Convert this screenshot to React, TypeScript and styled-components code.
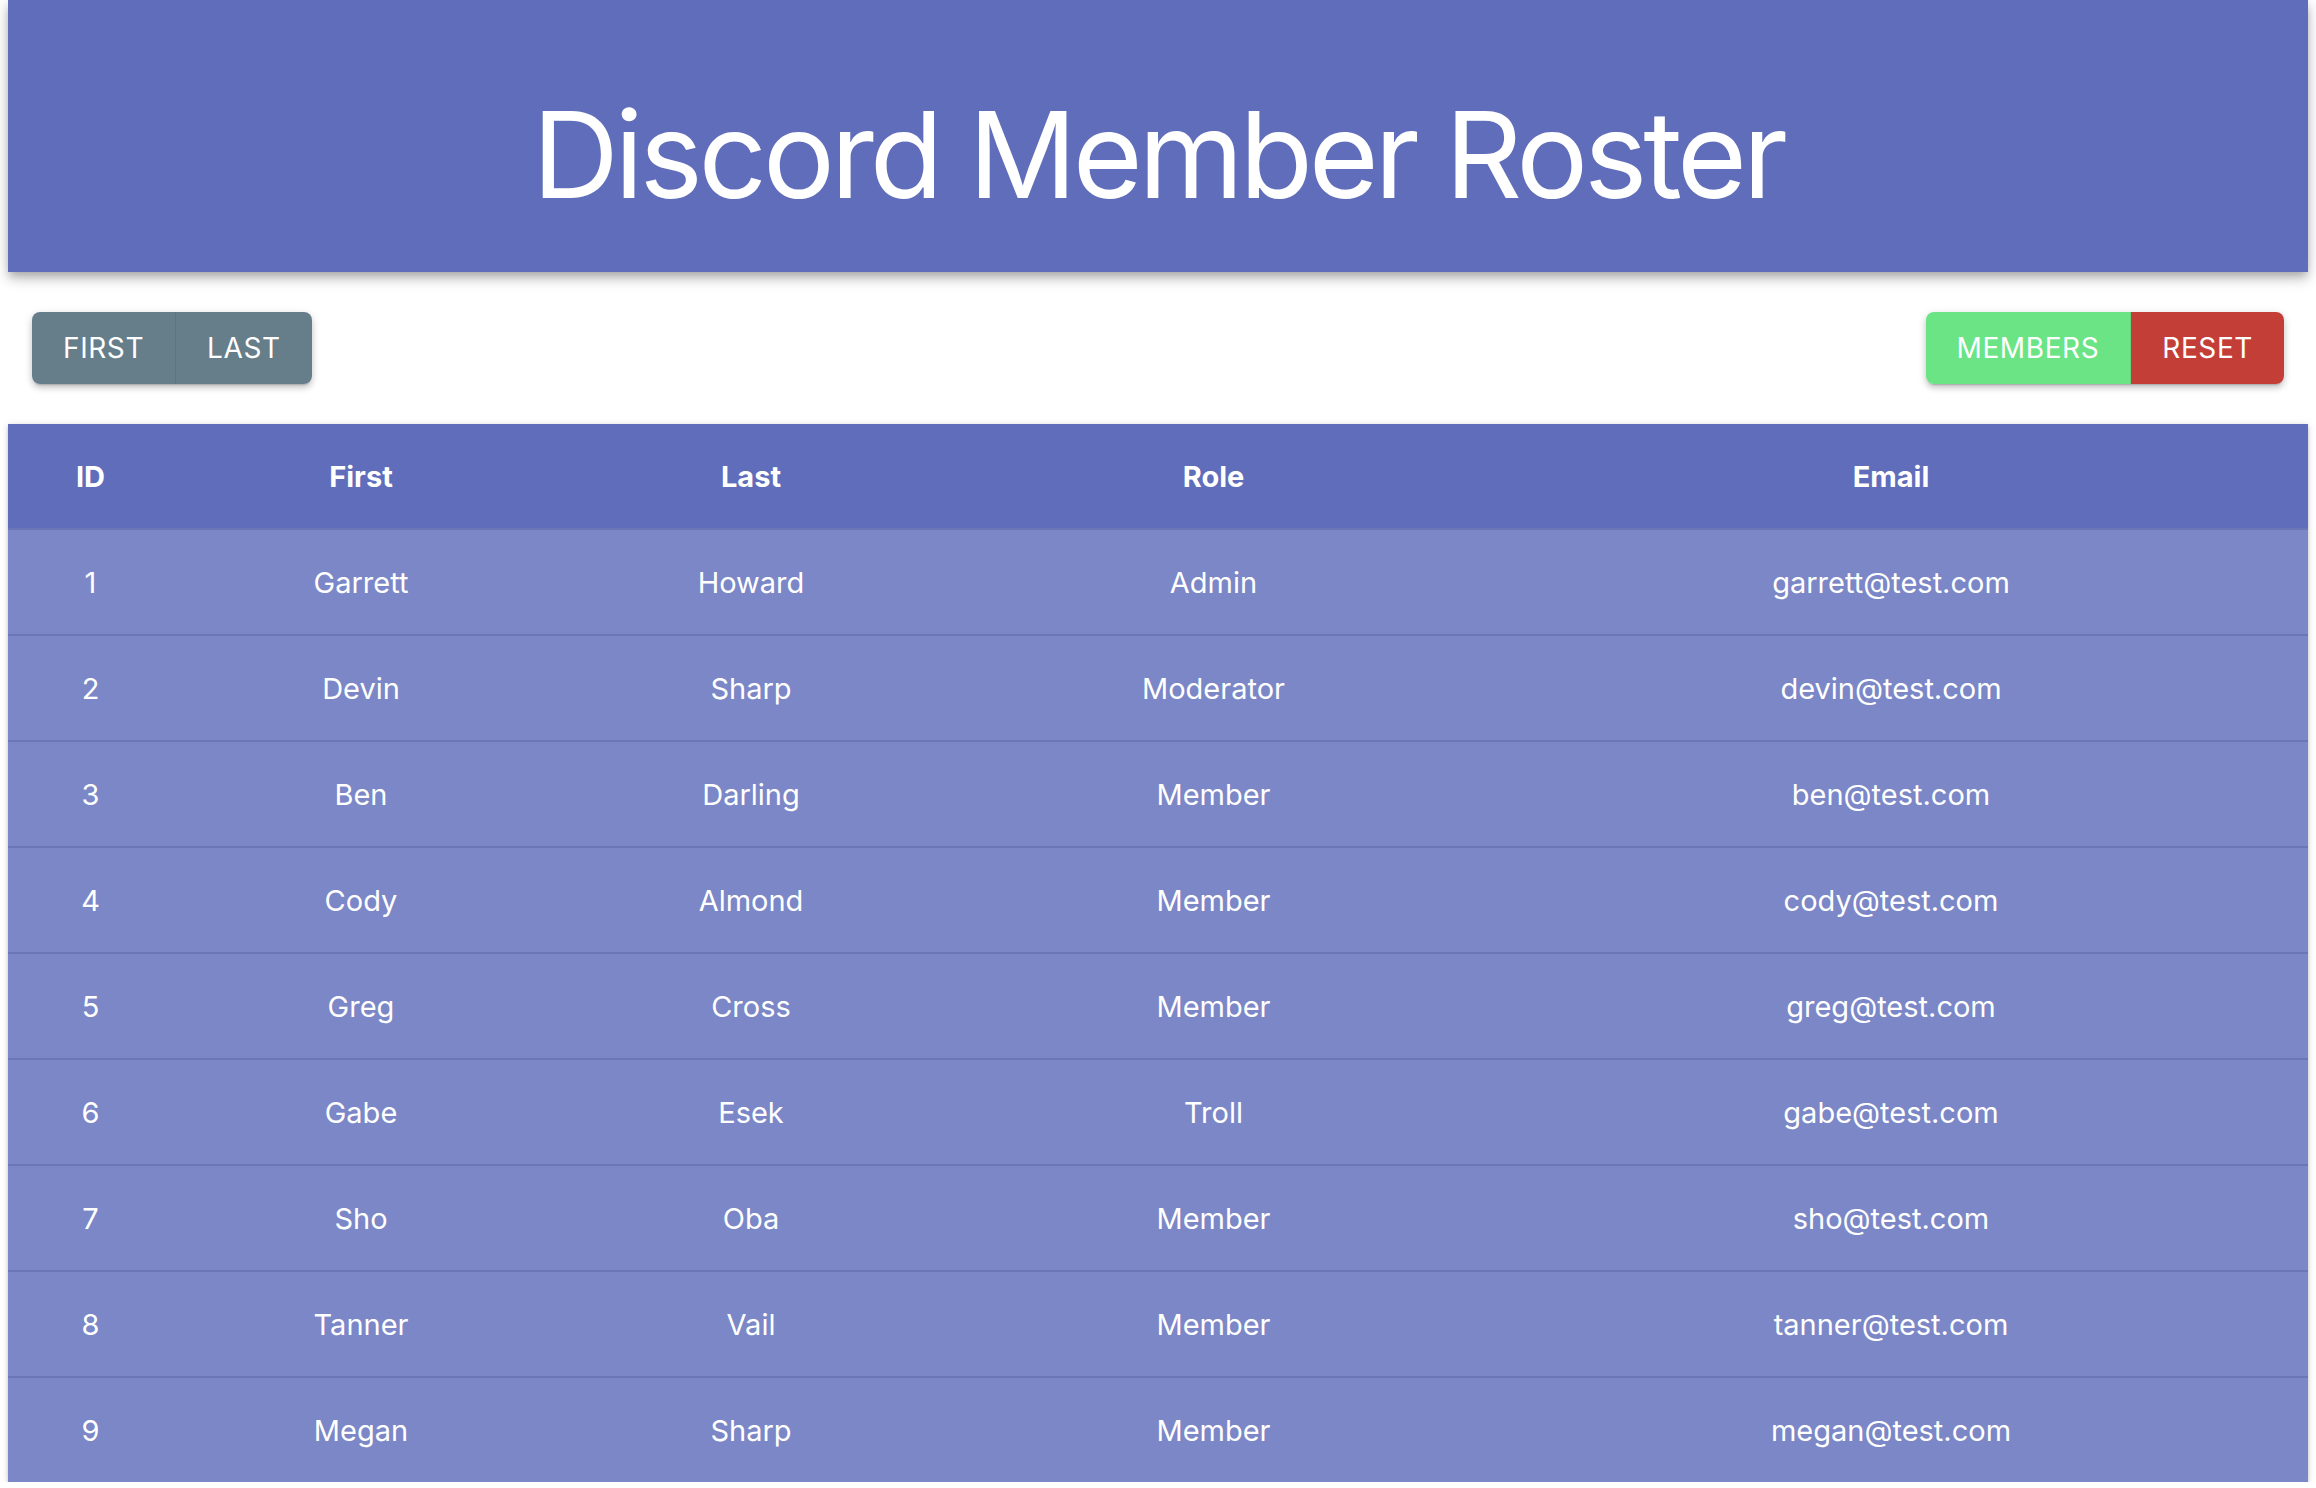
import styled, { createGlobalStyle } from 'styled-components';

const GlobalStyle = createGlobalStyle`
  body {
    margin: 0;
    background: #ffffff;
    font-family: Inter, "Noto Sans", sans-serif;
  }
`;

type Member = {
  id: number;
  first: string;
  last: string;
  role: string;
  email: string;
};

const members: Member[] = [
  { id: 1, first: 'Garrett', last: 'Howard', role: 'Admin', email: 'garrett@test.com' },
  { id: 2, first: 'Devin', last: 'Sharp', role: 'Moderator', email: 'devin@test.com' },
  { id: 3, first: 'Ben', last: 'Darling', role: 'Member', email: 'ben@test.com' },
  { id: 4, first: 'Cody', last: 'Almond', role: 'Member', email: 'cody@test.com' },
  { id: 5, first: 'Greg', last: 'Cross', role: 'Member', email: 'greg@test.com' },
  { id: 6, first: 'Gabe', last: 'Esek', role: 'Troll', email: 'gabe@test.com' },
  { id: 7, first: 'Sho', last: 'Oba', role: 'Member', email: 'sho@test.com' },
  { id: 8, first: 'Tanner', last: 'Vail', role: 'Member', email: 'tanner@test.com' },
  { id: 9, first: 'Megan', last: 'Sharp', role: 'Member', email: 'megan@test.com' },
];

const columns = [
  { label: 'ID', width: 165 },
  { label: 'First', width: 376 },
  { label: 'Last', width: 404 },
  { label: 'Role', width: 521 },
  { label: 'Email', width: 834 },
];

function App() {
  return (
    <Page>
      <GlobalStyle />
      <Header>
        <Title>Discord Member Roster</Title>
      </Header>
      <Toolbar>
        <ButtonGroup>
          <Button $color="#667d8a">First</Button>
          <Button $color="#667d8a">Last</Button>
        </ButtonGroup>
        <ButtonGroup>
          <Button $color="#6ae484">Members</Button>
          <Button $color="#c43e38">Reset</Button>
        </ButtonGroup>
      </Toolbar>
      <TablePaper>
        <Table>
          <colgroup>
            {columns.map((c) => (
              <col key={c.label} style={{ width: c.width }} />
            ))}
          </colgroup>
          <thead>
            <tr>
              {columns.map((c) => (
                <HeadCell key={c.label}>{c.label}</HeadCell>
              ))}
            </tr>
          </thead>
          <tbody>
            {members.map((m) => (
              <Row key={m.id}>
                <Cell>{m.id}</Cell>
                <Cell>{m.first}</Cell>
                <Cell>{m.last}</Cell>
                <Cell>{m.role}</Cell>
                <Cell>{m.email}</Cell>
              </Row>
            ))}
          </tbody>
        </Table>
      </TablePaper>
    </Page>
  );
}

export default App;

const Page = styled.div`
  padding: 0 8px;
`;

const Header = styled.header`
  box-sizing: border-box;
  height: 272px;
  padding-top: 95px;
  background-color: #606dba;
  box-shadow: rgba(0, 0, 0, 0.2) 0px 4px 8px -2px, rgba(0, 0, 0, 0.14) 0px 8px 10px 0px,
    rgba(0, 0, 0, 0.12) 0px 2px 20px 0px;
  text-align: center;
`;

const Title = styled.h1`
  margin: 0;
  font-family: Inter, "Noto Sans", sans-serif;
  font-weight: 400;
  font-size: 120px;
  line-height: 1;
  letter-spacing: -4.2px;
  color: #ffffff;
`;

const Toolbar = styled.div`
  display: flex;
  justify-content: space-between;
  align-items: center;
  padding: 40px 24px;
`;

const ButtonGroup = styled.div`
  display: flex;
  border-radius: 8px;
  box-shadow: rgba(0, 0, 0, 0.2) 0px 3px 2px -2px, rgba(0, 0, 0, 0.14) 0px 4px 6px 0px,
    rgba(0, 0, 0, 0.12) 0px 2px 10px 0px;
`;

const Button = styled.button<{ $color: string }>`
  height: 72px;
  padding: 0 31px;
  border: none;
  border-right: 1px solid rgba(0, 0, 0, 0.08);
  background-color: ${(p) => p.$color};
  color: #ffffff;
  font-family: Inter, "Noto Sans", sans-serif;
  font-size: 28px;
  font-weight: 400;
  letter-spacing: 0.6px;
  text-transform: uppercase;
  cursor: pointer;

  &:first-child {
    border-radius: 8px 0 0 8px;
  }
  &:last-child {
    border-right: none;
    border-radius: 0 8px 8px 0;
  }
`;

const TablePaper = styled.div`
  box-shadow: rgba(0, 0, 0, 0.2) 0px 2px 2px -1px, rgba(0, 0, 0, 0.14) 0px 2px 4px 0px,
    rgba(0, 0, 0, 0.12) 0px 1px 8px 0px;
`;

const Table = styled.table`
  width: 100%;
  table-layout: fixed;
  border-collapse: collapse;
  color: #ffffff;
  font-family: Inter, "Noto Sans", sans-serif;
`;

const HeadCell = styled.th`
  height: 104px;
  padding: 0;
  background-color: #606dba;
  font-size: 29px;
  font-weight: 700;
  text-align: center;
  border-bottom: 2px solid #6a76b6;
`;

const Row = styled.tr`
  background-color: #7b87c6;
  border-bottom: 2px solid #6a76b6;

  &:last-child {
    border-bottom: none;
  }
`;

const Cell = styled.td`
  height: 104px;
  padding: 0;
  font-size: 29px;
  font-weight: 400;
  text-align: center;
`;
